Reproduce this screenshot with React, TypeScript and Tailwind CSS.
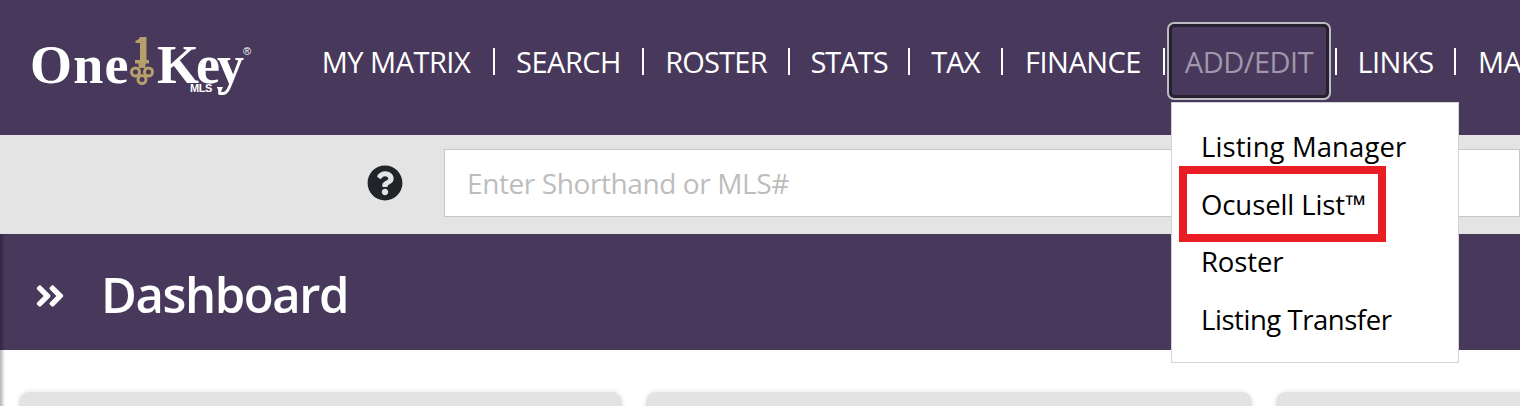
import React from "react";
import { FaQuestionCircle, FaAngleDoubleRight } from "react-icons/fa";

const font = { fontFamily: '"Open Sans", "Noto Sans", sans-serif' };

function Sep() {
  return <span className="block h-[27px] w-[2px] shrink-0 bg-white" />;
}

function Logo() {
  return (
    <div className="relative flex h-[60px] w-[299px] shrink-0 items-center pl-[30px] text-white">
      <span className="w-[95px] translate-y-[4px] font-['Liberation_Serif',serif] text-[54px] font-bold leading-none tracking-[1.2px]">One</span>
      <svg viewBox="0 0 24 49" className="ml-[5px] h-[49px] w-[24px] shrink-0" fill="#b5a06c">
        <path d="M10 0h6.5v23H19v3.5h-3.5V31h-7v-4.500H5V23h5V6H5.500V3.500C7.500 3.500 9 2 10 0z" />
        <circle cx="5.500" cy="35" r="4" fill="none" stroke="#b5a06c" strokeWidth="3" />
        <circle cx="18.500" cy="35" r="4" fill="none" stroke="#b5a06c" strokeWidth="3" />
        <circle cx="12" cy="42.500" r="4" fill="none" stroke="#b5a06c" strokeWidth="3" />
      </svg>
      <span className="ml-[3px] translate-y-[4px] font-['Liberation_Serif',serif] text-[54px] font-bold leading-none tracking-[-3px]">Key</span>
      <span className="absolute left-[190px] top-[52px] font-['Liberation_Sans',sans-serif] text-[11px] font-bold leading-none">MLS</span>
      <svg viewBox="0 0 20 12" className="absolute left-[216px] top-[55px] h-[9px] w-[14px]" fill="#fff">
        <path d="M1 1h9L6 10z" />
      </svg>
      <span className="absolute left-[243px] top-[15px] font-['Liberation_Sans',sans-serif] text-[11px] leading-none">®</span>
    </div>
  );
}

export default function App() {
  return (
    <div className="relative h-[406px] w-[1520px] overflow-hidden bg-white" style={font}>
      <header className="flex h-[135px] items-center whitespace-nowrap bg-[#47385c] pb-[13px] text-[29px] leading-none tracking-[-0.5px]">
        <Logo />
        <div className="flex items-center">
          <a className="block w-[194px] text-center text-white">MY MATRIX</a>
          <Sep />
          <a className="block w-[147px] text-center text-white">SEARCH</a>
          <Sep />
          <a className="block w-[144px] text-center tracking-[-0.8px] text-white">ROSTER</a>
          <Sep />
          <a className="block w-[118px] text-center tracking-[-1px] text-white">STATS</a>
          <Sep />
          <a className="block w-[91px] text-center tracking-[-0.8px] text-white">TAX</a>
          <Sep />
          <a className="block w-[160px] text-center text-white">FINANCE</a>
          <Sep />
          <div className="relative ml-[2px] mr-[4px] w-[164px]">
            <a className="flex h-[78px] w-[164px] items-center justify-center rounded-[7px] border-[2px] border-[#bdbac2] text-[#9f97aa] shadow-[inset_0_0_0_3px_#252130]">
              ADD/EDIT
            </a>
            <div className="absolute left-[4px] top-[80px] z-10 h-[261px] w-[288px] border border-[#d4d4d4] bg-white pl-[29px] pt-[15px] text-[27.5px] tracking-[-0.1px] text-black">
              <div className="flex h-[57.5px] items-center tracking-[0.1px]">Listing Manager</div>
              <div className="flex h-[57.5px] items-center">Ocusell List™</div>
              <div className="flex h-[57.5px] items-center">Roster</div>
              <div className="flex h-[57.5px] items-center tracking-[-0.45px]">Listing Transfer</div>
              <div className="absolute left-[7px] top-[63px] h-[76px] w-[207px] border-[8px] border-[#ea1c24]" />
            </div>
          </div>
          <Sep />
          <a className="block w-[117px] text-center text-white">LINKS</a>
          <Sep />
          <a className="block pl-[22px] text-white">MARKET</a>
        </div>
      </header>

      <div className="flex h-[99px] items-center bg-[#e4e4e4] pb-[3px] pl-[367px]">
        <FaQuestionCircle className="h-[36px] w-[36px] shrink-0 text-[#212529]" />
        <div className="ml-[41px] flex h-[68px] flex-1 items-center border border-[#c6c6c6] bg-white pl-[22px] text-[28px] tracking-[-0.4px] text-[#bdbdbd]">
          Enter Shorthand or MLS#
        </div>
      </div>

      <div className="flex h-[116px] items-center bg-[#47385c] pl-[33px] text-white">
        <FaAngleDoubleRight className="h-[34px] w-[34px] shrink-0 translate-y-[4px]" />
        <h1 className="ml-[34px] translate-y-[2px] text-[49px] font-semibold leading-none tracking-[-1.4px]">Dashboard</h1>
      </div>

      <main className="flex gap-[24px] pl-[19px] pt-[42px]">
        <div className="h-[40px] w-[603px] shrink-0 rounded-t-[10px] bg-[#e3e3e3] shadow-[0_0_5px_rgba(0,0,0,0.12)]" />
        <div className="h-[40px] w-[606px] shrink-0 rounded-t-[10px] bg-[#e3e3e3] shadow-[0_0_5px_rgba(0,0,0,0.12)]" />
        <div className="h-[40px] w-[300px] shrink-0 rounded-t-[10px] bg-[#e3e3e3] shadow-[0_0_5px_rgba(0,0,0,0.12)]" />
      </main>

      <div className="absolute bottom-0 left-0 top-[234px] w-[5px] bg-gradient-to-r from-black/30 to-transparent" />
    </div>
  );
}
